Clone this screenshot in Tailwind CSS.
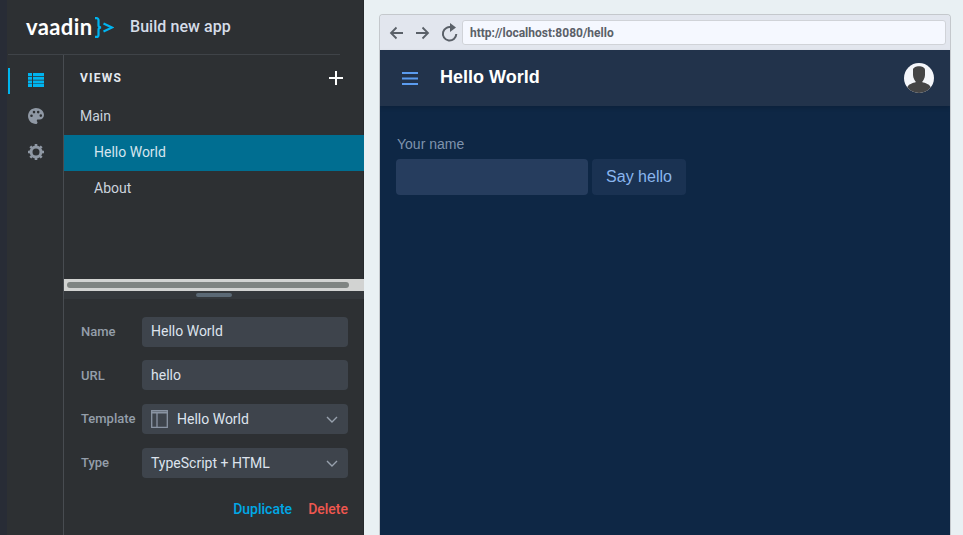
<!DOCTYPE html>
<html lang="en">
<head>
    <meta charset="UTF-8">
    <title>Build new app</title>
    <script src="https://cdn.jsdelivr.net/npm/@tailwindcss/browser@4"></script>
</head>
<body class="overflow-hidden">
<div class="flex w-[963px] h-[535px] overflow-hidden font-['Roboto',sans-serif]">

    <!-- Left edge -->
    <div class="w-[7px] bg-[#282c36]"></div>

    <!-- Builder sidebar -->
    <aside class="w-[357px] pl-[1px] bg-[#2d3033] flex flex-col shadow-[inset_-1px_0_0_#26292c]">
        <header class="h-[55px] shrink-0 w-[332px] border-b border-[#3f4348] flex items-center">
            <span class="ml-[18px] flex items-center w-[104px] h-[30px]">
                <span class="font-['Lato',sans-serif] font-bold text-[22px] tracking-[0.4px] text-white leading-none">vaadin</span>
                <svg class="ml-[1px] mt-[1px]" width="20" height="21" viewBox="0 0 20 21" fill="none" stroke="#00b4f0" stroke-width="2.200">
                    <path d="M1 1.100h1.500a2 2 0 0 1 2 2v5a2.200 2.200 0 0 0 2.500 2.400 2.200 2.200 0 0 0-2.500 2.400v5a2 2 0 0 1-2 2H1"/>
                    <path d="M9.500 6.500l8.500 4-8.500 4"/>
                </svg>
            </span>
            <span class="text-[16px] font-medium tracking-[0.05px] text-[#d5dde8]">Build new app</span>
        </header>

        <div class="flex-1 flex min-h-0">
            <!-- Icon rail -->
            <nav class="w-[56px] shrink-0 border-r border-[#484c51] flex flex-col items-center pt-[7px] relative">
                <span class="absolute left-0 top-[13px] w-[2px] h-[26px] bg-[#00b4f0]"></span>
                <div class="h-[36px] flex items-center justify-center">
                    <svg width="16" height="14" viewBox="0 0 16 14" fill="#00b4f0">
                        <path d="M0 0h4v3H0zM5 0h11v3H5zM0 3.700h4v3H0zM5 3.700h11v3H5zM0 7.400h4v3H0zM5 7.400h11v3H5zM0 11h4v3H0zM5 11h11v3H5z"/>
                    </svg>
                </div>
                <div class="h-[36px] flex items-center justify-center">
                    <svg width="16" height="16" viewBox="0 0 16 16">
                        <path fill="#8f98a4" fill-rule="evenodd" d="M8 0c4.400 0 8 3.100 8 7 0 2.500-2 4.500-4.500 4.500H10c-.7 0-1.200.5-1.200 1.200 0 .3.1.6.3.8.3.3.4.6.4 1 0 .8-.7 1.500-1.500 1.500C3.600 16 0 12.400 0 8S3.600 0 8 0zM3.500 6.500a1.300 1.300 0 1 0 0 2.600 1.300 1.300 0 0 0 0-2.600zM6 2.800a1.300 1.300 0 1 0 0 2.600 1.300 1.300 0 0 0 0-2.600zM10.200 2.800a1.300 1.300 0 1 0 0 2.600 1.300 1.300 0 0 0 0-2.600zM12.800 6.300a1.300 1.300 0 1 0 0 2.600 1.300 1.300 0 0 0 0-2.600z"/>
                    </svg>
                </div>
                <div class="h-[36px] flex items-center justify-center">
                    <svg width="16" height="16" viewBox="0 0 16 16" fill="none">
                        <circle cx="8" cy="8" r="5" stroke="#8f98a4" stroke-width="3"/>
                        <path stroke="#8f98a4" stroke-width="2.600" d="M8 0v3M8 13v3M0 8h3M13 8h3M2.300 2.300l2.100 2.100M11.600 11.600l2.100 2.100M2.300 13.700l2.100-2.100M11.600 4.400l2.100-2.100"/>
                    </svg>
                </div>
            </nav>

            <!-- Views and properties -->
            <div class="flex-1 min-w-0 flex flex-col">
                <div class="h-[224px] shrink-0 flex flex-col">
                    <div class="h-[44px] shrink-0 flex items-center justify-between pt-[2px] pl-[16px] pr-[21px]">
                        <span class="text-[12px] font-bold tracking-[1.200px] text-[#e4e8ee]">VIEWS</span>
                        <svg width="14" height="14" viewBox="0 0 14 14" stroke="#fff" stroke-width="2"><path d="M7 0v14M0 7h14"/></svg>
                    </div>
                    <div class="h-[36px] shrink-0 flex items-center pb-[2px] pl-[16px] text-[14px] text-[#cbd3dd]">Main</div>
                    <div class="h-[36px] shrink-0 flex items-center pb-[2px] pl-[30px] text-[14px] text-[#d5e5ee] bg-[#006e91]">Hello World</div>
                    <div class="h-[36px] shrink-0 flex items-center pb-[2px] pl-[30px] text-[14px] text-[#cbd3dd]">About</div>
                </div>

                <!-- Scrollbar -->
                <div class="h-[12px] shrink-0 bg-[#d2d3d2] px-[3px] flex items-center">
                    <div class="w-[282px] h-[6px] rounded-full bg-[#7f8482]"></div>
                </div>
                <!-- Splitter -->
                <div class="h-[8px] shrink-0 bg-[#34383c] flex items-center pl-[132px]">
                    <div class="w-[36px] h-[4px] rounded-full bg-[#5b6975]"></div>
                </div>

                <form class="flex-1 flex flex-col pl-[17px] pr-[16px] pt-[18px] text-[14px]">
                    <div class="flex items-center h-[30px] mb-[13px]">
                        <label class="w-[61px] text-[13px] font-medium text-[#949eaa]">Name</label>
                        <div class="flex-1 h-full rounded-[4px] bg-[#3e444c] flex items-center pb-[2px] px-[9px] text-[#dde3ec]">Hello World</div>
                    </div>
                    <div class="flex items-center h-[30px] mb-[14px]">
                        <label class="w-[61px] pt-[2px] text-[13px] font-medium text-[#949eaa]">URL</label>
                        <div class="flex-1 h-full rounded-[4px] bg-[#3e444c] flex items-center px-[9px] text-[#dde3ec]">hello</div>
                    </div>
                    <div class="flex items-center h-[30px] mb-[14px]">
                        <label class="w-[61px] text-[13px] font-medium text-[#949eaa]">Template</label>
                        <div class="flex-1 h-full rounded-[4px] bg-[#3e444c] flex items-center pl-[9px] pr-[10px] text-[#dde3ec]">
                            <svg class="mr-[9px]" width="17" height="18" viewBox="0 0 17 18" fill="none" stroke="#8a94a3" stroke-width="1.300">
                                <path d="M.7.700h15.600v16.600H.7z"/><path stroke-width="2" d="M0 2.500h17"/><path d="M6 3v14"/>
                            </svg>
                            <span class="flex-1">Hello World</span>
                            <svg width="12" height="7" viewBox="0 0 12 7" fill="none" stroke="#98a1ad" stroke-width="1.400"><path d="M1 1l5 5 5-5"/></svg>
                        </div>
                    </div>
                    <div class="flex items-center h-[30px]">
                        <label class="w-[61px] text-[13px] font-medium text-[#949eaa]">Type</label>
                        <div class="flex-1 h-full rounded-[4px] bg-[#3e444c] flex items-center pl-[9px] pr-[10px] text-[#dde3ec]">
                            <span class="flex-1">TypeScript + HTML</span>
                            <svg width="12" height="7" viewBox="0 0 12 7" fill="none" stroke="#98a1ad" stroke-width="1.400"><path d="M1 1l5 5 5-5"/></svg>
                        </div>
                    </div>
                    <div class="flex justify-end gap-[16px] mt-[22px] font-medium leading-[18px]">
                        <span class="text-[#00a8e6]">Duplicate</span>
                        <span class="text-[#f0574f]">Delete</span>
                    </div>
                </form>
            </div>
        </div>
    </aside>

    <!-- Preview area -->
    <main class="flex-1 bg-[#e9f0f3] pl-[15px] pr-[12px] pt-[14px]">
        <div class="h-[540px] border-x border-t border-[#c4c8cc] rounded-t-[4px] flex flex-col overflow-hidden">
            <div class="h-[35px] shrink-0 bg-[#e2e6ee] flex items-center pl-[9px] pr-[4px]">
                <svg class="mr-[11px]" width="15" height="14" viewBox="0 0 15 14" fill="none" stroke="#5a6068" stroke-width="1.800"><path d="M14 7H2M7.500 1.500L2 7l5.500 5.500"/></svg>
                <svg class="mr-[11px]" width="15" height="14" viewBox="0 0 15 14" fill="none" stroke="#5a6068" stroke-width="1.800"><path d="M1 7h12M7.500 1.500L13 7l-5.500 5.500"/></svg>
                <svg class="mr-[4px]" width="17" height="20" viewBox="0 0 17 20" fill="none" stroke="#5a6068" stroke-width="2"><path d="M11 4.500A6.700 6.700 0 1 0 15.300 11"/><path fill="#5a6068" stroke="none" d="M9 0l6 4.500-6 4.500z"/></svg>
                <div class="flex-1 h-[25px] rounded-[3px] bg-[#f5f8ff] border border-[#d0d3d8] flex items-center pl-[7px] text-[12px] font-bold text-[#5a6068]">http://localhost:8080/hello</div>
            </div>
            <div class="h-[56px] shrink-0 bg-[#22334b] flex items-center pl-[22px] pr-[16px] shadow-[0_2px_4px_rgba(0,0,0,0.15)] relative">
                <svg class="mr-[22px]" width="16" height="13" viewBox="0 0 16 13" stroke="#5b9cf0" stroke-width="2"><path d="M0 1h16M0 6.500h16M0 12h16"/></svg>
                <h1 class="flex-1 pb-[2px] font-['Liberation_Sans',sans-serif] font-bold text-[18px] text-white">Hello World</h1>
                <svg width="30" height="30" viewBox="0 0 30 30">
                    <defs><clipPath id="avatar"><circle cx="15" cy="15" r="15"/></clipPath></defs>
                    <circle cx="15" cy="15" r="15" fill="#f4f6fa"/>
                    <g clip-path="url(#avatar)" fill="#454545">
                        <path d="M9 7c0-5 12-5 12 0v5c0 3-2 6-3 7 3 1 8 2 9 6v5H3v-5c1-4 6-5 9-6-1-1-3-4-3-7z"/>
                    </g>
                </svg>
            </div>
            <div class="flex-1 bg-[#0e2745] pl-[16px] pt-[30px] font-['Liberation_Sans',sans-serif]">
                <div class="pl-[1px] text-[14px] leading-[16px] text-[#7f93ad]">Your name</div>
                <div class="flex gap-[4px] mt-[7px]">
                    <div class="w-[192px] h-[36px] rounded-[4px] bg-[#263d5e]"></div>
                    <button class="w-[94px] h-[36px] rounded-[4px] bg-[#1a3252] text-[16px] text-[#8ab6ee]">Say hello</button>
                </div>
            </div>
        </div>
    </main>
</div>
</body>
</html>
